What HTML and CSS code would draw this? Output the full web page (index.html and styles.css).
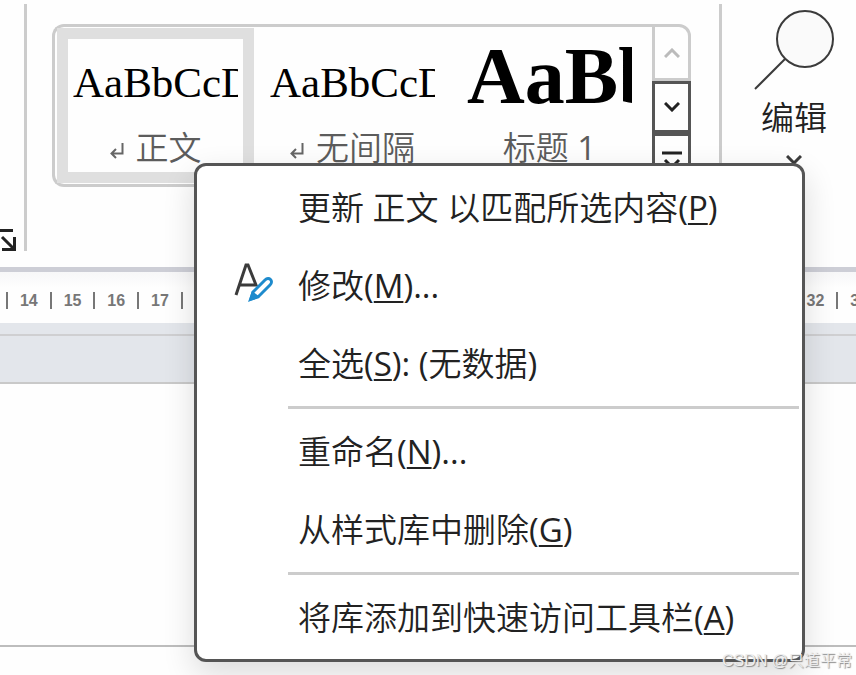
FILE: index.html
```html
<!DOCTYPE html>
<html lang="zh">
<head>
  <meta charset="UTF-8" />
  <title>样式</title>
  <meta name="viewport" content="width=device-width, initial-scale=1.0">
  <link rel="stylesheet" href="styles.css">
</head>
<body>
  <header class="ribbon">
    <button class="launcher" aria-label="样式窗格">
      <svg width="16" height="22" viewBox="0 0 16 22">
        <path d="M0 1.5H13M2 8L14 20M2 20.5H14.5V8" />
      </svg>
    </button>
    <div class="divider"></div>

    <div class="gallery">
      <div class="styles">
        <button class="style selected">
          <span class="preview">AaBbCcD</span>
          <span class="name">
            <svg class="para" width="14" height="16" viewBox="0 0 14 16"><path d="M12.5 0V10.5H1.5M6 6L1.5 10.5L6 15" /></svg>
            正文
          </span>
        </button>
        <button class="style">
          <span class="preview">AaBbCcD</span>
          <span class="name">
            <svg class="para" width="14" height="16" viewBox="0 0 14 16"><path d="M12.5 0V10.5H1.5M6 6L1.5 10.5L6 15" /></svg>
            无间隔
          </span>
        </button>
        <button class="style">
          <span class="preview heading">AaBb</span>
          <span class="name"><span>标题 <span class="latin">1</span></span></span>
        </button>
      </div>
      <div class="scroller">
        <button class="scroll up" aria-label="上一行" disabled>
          <svg width="16" height="10" viewBox="0 0 16 10"><path d="M1 9L8 2L15 9" /></svg>
        </button>
        <button class="scroll" aria-label="下一行">
          <svg width="16" height="10" viewBox="0 0 16 10"><path d="M1 1L8 8L15 1" /></svg>
        </button>
        <button class="scroll more" aria-label="其他">
          <svg width="20" height="18" viewBox="0 0 20 18"><path d="M0 2H20M3 9L10 16L17 9" /></svg>
        </button>
      </div>
    </div>

    <div class="divider"></div>
    <button class="edit">
      <svg width="82" height="82" viewBox="0 0 82 82">
        <circle cx="52" cy="31" r="28" />
        <path d="M32 51L2 81" />
      </svg>
      <span>编辑</span>
      <svg class="edit-arrow" width="16" height="10" viewBox="0 0 16 10"><path d="M1 1L8 8L15 1" /></svg>
    </button>
  </header>

  <div class="ruler">
    <div class="ticks">
      <span>14</span><span>15</span><span>16</span><span>17</span><span></span>
      <span></span><span></span><span></span><span></span><span></span>
      <span></span><span></span><span></span><span></span><span></span>
      <span></span><span></span><span></span><span>32</span><span>33</span>
    </div>
  </div>

  <main class="document">
    <div class="page-gap"></div>
    <div class="page"></div>
    <div class="page-end"></div>
  </main>

  <div class="menu" role="menu">
    <button class="item" role="menuitem"><span>更新 正文 以匹配所选内容<span class="latin">(<u>P</u>)</span></span></button>
    <button class="item" role="menuitem">
      <svg class="item-icon" width="40" height="48" viewBox="0 0 40 48">
        <path class="letter" d="M2 33L12 3H14L22 23H6" />
        <path class="pencil" d="M17 37L19 30L31 18C35 14 40 19 36 23L24 35Z" />
        <path class="tip" d="M14 40L18 29L26 35Z" />
      </svg>
      <span>修改<span class="latin">(<u>M</u>)...</span></span>
    </button>
    <button class="item" role="menuitem"><span>全选<span class="latin">(<u>S</u>): (</span>无数据<span class="latin">)</span></span></button>
    <hr>
    <button class="item" role="menuitem"><span>重命名<span class="latin">(<u>N</u>)...</span></span></button>
    <button class="item" role="menuitem"><span>从样式库中删除<span class="latin">(<u>G</u>)</span></span></button>
    <hr>
    <button class="item" role="menuitem"><span>将库添加到快速访问工具栏<span class="latin">(<u>A</u>)</span></span></button>
  </div>

  <div class="watermark">CSDN @只道平常</div>
</body>
</html>
```
FILE: styles.css
```css
:root {
  --line: #cccccc;
  --dark: #555555;
  --ui-font: 'Open Sans', 'Noto Sans CJK SC', sans-serif;
  --ui-weight: 350;
}

* {
  box-sizing: border-box;
}

body {
  position: relative;
  display: flex;
  flex-direction: column;
  min-height: 100vh;
  margin: 0;
  overflow: hidden;
  background: #fefefe;
  font-family: var(--ui-font);
  font-weight: var(--ui-weight);
  color: #222;
}

button {
  margin: 0;
  padding: 0;
  border: none;
  background: none;
  font: inherit;
  color: inherit;
}

svg {
  display: block;
  flex: none;
  fill: none;
  stroke: #222;
  stroke-width: 3;
}

.latin {
  font-weight: 400;
}

/* ribbon */
.ribbon {
  display: flex;
  align-items: flex-start;
  padding: 4px 0 16px;
}

.launcher {
  align-self: flex-end;
  margin-right: 8px;
}

.divider {
  flex: none;
  width: 3px;
  height: 247px;
  background: var(--line);
}

.gallery {
  display: flex;
  flex: none;
  height: 163px;
  margin: 20px 28px 0 25px;
}

.styles {
  display: flex;
  padding: 1px 4px 1px 2px;
  border: 3px solid var(--line);
  border-right: none;
  border-radius: 12px 0 0 12px;
}

.style {
  display: flex;
  flex-direction: column;
  width: 197px;
  padding: 0 5px;
  border: 11px solid transparent;
}

.style.selected {
  border-color: #dfdfdf;
}

.preview {
  width: 100%;
  height: 87px;
  overflow: hidden;
  font-family: 'Liberation Serif', serif;
  font-size: 43px;
  font-weight: normal;
  line-height: 87px;
  text-align: left;
  color: #000;
}

.preview.heading {
  font-size: 80px;
  font-weight: bold;
  line-height: 74px;
}

.name {
  display: flex;
  align-items: center;
  justify-content: center;
  gap: 12px;
  width: 100%;
  font-size: 33px;
  line-height: 44px;
  white-space: nowrap;
  color: #5c5c5c;
}

.para {
  margin-top: 6px;
  stroke: #666;
  stroke-width: 2;
}

.scroller {
  display: flex;
  flex-direction: column;
}

.scroll {
  display: flex;
  align-items: center;
  justify-content: center;
  width: 39px;
  height: 52px;
  border: 3px solid var(--dark);
}

.scroll.up {
  height: 57px;
  border-color: var(--line);
  border-radius: 0 12px 0 0;
}

.scroll.up svg {
  stroke: #bbb;
}

.scroll.more {
  height: 54px;
  border-radius: 0 0 12px 0;
}

.edit {
  display: flex;
  flex-direction: column;
  align-items: center;
  padding: 4px 0 0 31px;
  font-size: 33px;
  line-height: 44px;
}

.edit span {
  margin-top: 6px;
}

.edit circle {
  fill: #fafafa;
}

.edit svg {
  stroke: #3b3b3b;
  stroke-width: 2;
}

.edit .edit-arrow {
  margin-top: 15px;
  stroke-width: 3;
}

/* ruler */
.ruler {
  padding: 20px 0 14px 6px;
  border-top: 5px solid #cdced6;
  overflow: hidden;
  background: linear-gradient(#f7f7f8, #fefefe 16px);
}

.ticks {
  display: flex;
  width: calc(100% + 24px);
}

.ticks span {
  flex: 1;
  border-left: 2px solid #777;
  font-family: 'Liberation Sans', sans-serif;
  font-size: 16px;
  font-weight: bold;
  line-height: 17px;
  text-align: center;
  color: #777;
}

/* document */
.document {
  display: flex;
  flex: 1;
  flex-direction: column;
}

.page-gap {
  height: 61px;
  padding-top: 11px;
  border-bottom: 2px solid #c9c9c9;
  background: #e3e6eb;
}

.page-gap::before {
  content: '';
  display: block;
  height: 2px;
  background: #cfcfd1;
}

.page {
  flex: 1;
}

.page-end {
  height: 30px;
  border-top: 2px solid #bdbdbd;
}

/* context menu */
.menu {
  position: absolute;
  top: 163px;
  left: 194px;
  right: 51px;
  padding: 3px 0 2px;
  border: 3px solid var(--dark);
  border-radius: 12px;
  background: #fff;
  box-shadow: 0 12px 32px rgba(0, 0, 0, 0.14);
}

.item {
  display: grid;
  grid-template-columns: 64px 1fr;
  align-items: center;
  width: 100%;
  height: 78px;
  padding-left: 37px;
  font-size: 33px;
  line-height: 44px;
  text-align: left;
  white-space: nowrap;
}

.item > span {
  grid-column: 2;
}

.item u {
  text-decoration-thickness: 2px;
  text-underline-offset: 3px;
}

.item-icon {
  stroke: #3b3b3b;
}

.item-icon .pencil {
  stroke: #1e8bcd;
}

.item-icon .tip {
  fill: #1e8bcd;
  stroke: none;
}

.menu hr {
  height: 3px;
  margin: 3px 3px 4px 91px;
  border: none;
  background: var(--line);
}

.watermark {
  position: absolute;
  right: 4px;
  bottom: 2px;
  font-family: 'Liberation Sans', 'Noto Sans CJK SC', sans-serif;
  font-size: 16px;
  line-height: 24px;
  color: #eee;
  text-shadow: 1px 1px 1px #888;
}
```
